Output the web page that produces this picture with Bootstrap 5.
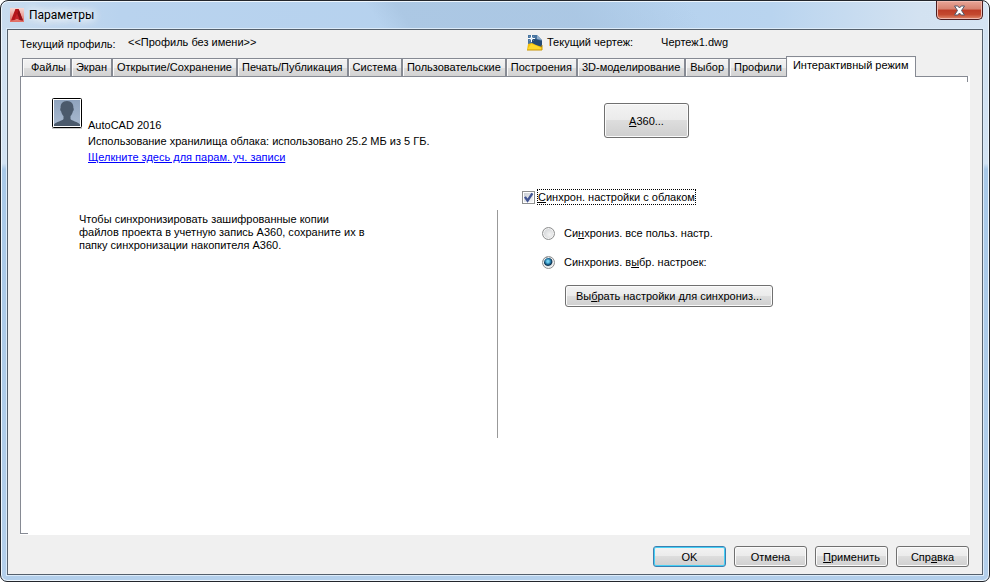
<!DOCTYPE html>
<html lang="ru">
<head>
<meta charset="utf-8">
<meta name="viewport" content="width=device-width, initial-scale=1">
<title>Параметры</title>
<link rel="stylesheet" href="https://cdn.jsdelivr.net/npm/bootstrap@5.3.0/dist/css/bootstrap.min.css">
<style>
body { font: 11px/16px "Liberation Sans", Arial, sans-serif; color: #000; background: #fff; }
.win { min-height: 100vh; padding: 0 6px 6px; border: 1px solid #23262c; border-radius: 8px 8px 7px 7px;
  box-shadow: inset 0 0 0 1px #eef6fd;
  background:
    linear-gradient(55deg, transparent 0 38%, #a3bfdb88 41% 58%, transparent 70%) 0 0 / 100% 29px no-repeat,
    linear-gradient(90deg, #c9dcef 0, #b9d3ee 12%, #b4d1ee 60%, #b9d4ef 78%, #d3e2f1 93%, #d5e4f3 100%) 0 0 / 100% 29px no-repeat,
    linear-gradient(180deg, #d0e0f0, #d3e3f3 28%, #a9c9e8 29%, #b3cfeb); }
.titlebar { height: 28px; padding-left: 3px; }
.titlebar h1 { font: 12px/16px Roboto, "Open Sans", sans-serif; padding: 6px 0 0 5px; text-shadow: 0 0 8px #fff, 0 0 10px #fff, 0 0 12px #fff; }
.titlebar > svg { margin-top: 7px; }
.closer { width: 47px; height: 19px; border: 1px solid #4a1d20; border-top: 0; border-radius: 0 0 5px 5px;
  box-shadow: inset 0 0 0 1px #f0b9ae; background: linear-gradient(#e8a698 0, #d6826f 45%, #bd3c26 50%, #c4492f 75%, #e08a6c 100%); }
.client { border: 1px solid #55606c; background: #f0f0f0; box-shadow: 0 0 0 1px #dcebf9; padding: 0 12px 7px; }
.info { height: 26px; padding-top: 4px; }
.profile-label { padding-top: 2px; width: 108px; }
.drawing { width: 443px; }
.tabs { padding-left: 2px; }
.tab-btn { height: 18px; padding: 0 4px; border: 1px solid #868a93; border-bottom: 0; white-space: nowrap; line-height: 17px; font-size: 11px;
  background: linear-gradient(#f3f3f3, #ececec 50%, #dedede 51%, #d2d2d2); box-shadow: inset 1px 1px #fafafa; }
.tab-btn:first-child { padding-left: 8px; }
.tab-btn:nth-last-child(2) { border-right: 0; }
.tab-btn.active { height: 21px; padding: 0 6px 3px; margin-bottom: -1px; background: #fff; position: relative; }
.panel { background:
    linear-gradient(#868a93, #868a93) 0 0 / calc(100% - 2px) 1px no-repeat,
    linear-gradient(#868a93, #868a93) calc(100% - 2px) 0 / 1px 6px no-repeat,
    linear-gradient(#868a93, #868a93) 0 0 / 1px calc(100% - 1px) no-repeat,
    linear-gradient(#868a93, #868a93) 0 calc(100% - 1px) / 8px 1px no-repeat, #fff; }
.account { width: 50%; padding: 22px 0 0 32px; }
.account-text { padding: 19px 0 0 6px; }
.account a { color: #00f; }
.note { margin: 48px 0 0 27px; line-height: 13px; }
.divider { width: 1px; height: 228px; margin: 134px 0 96px 2px; background: #999; }
.sync { padding: 27px 0 0 24px; }
.w7 { color: #000; border: 1px solid #707070; border-radius: 3px; box-shadow: inset 0 0 0 1px #fbfbfb; padding: 0; font-size: 11px; line-height: 16px; white-space: nowrap;
  background: linear-gradient(#f3f3f3, #ebebeb 49%, #dddddd 50%, #cfcfcf); }
.w7:hover { color: #000; border-color: #3c7fb1; }
.w7-big { width: 85px; height: 35px; margin-left: 82px; }
.w7-wide { width: 208px; height: 22px; margin: 15px 0 0 43px; }
.w7-foot { width: 73px; height: 21px; }
.w7-default, .w7-default:hover { border-color: #3c7fb1; box-shadow: inset 0 0 0 1px #46d0f5; }
.cloud-row { margin-top: 52px; }
.focus-text { outline: 1px dotted #000; line-height: 14px; }
.tick { appearance: none; width: 13px; height: 13px; margin: 0 3px 0 0; border: 1px solid #8e8f8f;
  background: linear-gradient(135deg, #cbcfd5, #f6f6f6) content-box; padding: 1px; }
.tick:checked { background: url("data:image/svg+xml,%3Csvg xmlns='http://www.w3.org/2000/svg' viewBox='0 0 11 11'%3E%3Cpath d='M2.5 5L4.7 8.2 8.8 2' fill='none' stroke='%23415494' stroke-width='2'/%3E%3C/svg%3E") border-box, linear-gradient(135deg, #cbcfd5, #f6f6f6) content-box; }
.dot { appearance: none; width: 13px; height: 13px; margin: 0 9px 0 0; border: 1px solid #8e8f8f; border-radius: 50%;
  background: radial-gradient(circle at 60% 60%, #f4f4f4 0, #d6d8da 65%); box-shadow: inset 0 0 0 1px #f4f4f4; }
.dot:checked { background: radial-gradient(circle at 45% 40%, #6fd0f2 0 1px, #1a6a98 3px, #0d2f4b 4px, #dfe3e6 5px); }
.options { margin: 21px 0 0 20px; gap: 13px; }
.footer { padding-top: 11px; padding-right: 1px; }
</style>
</head>
<body>
<main class="win d-flex flex-column">
  <header class="titlebar d-flex align-items-start">
    <svg width="14" height="14" viewBox="0 0 14 14" class="flex-shrink-0" aria-hidden="true">
      <defs><linearGradient id="lg" x1="0" y1="0" x2="0" y2="1"><stop offset="0" stop-color="#f6d9d5"/><stop offset="1" stop-color="#df6b62"/></linearGradient></defs>
      <path fill="url(#lg)" d="M0 0h14v14H0z"/>
      <path fill="#b5151b" d="M5.400 1h3.200L13 12.500 9.600 12 7 10.500 4.400 12 1 12.500z"/>
      <path fill="#8d0f15" d="M8.600 1L13 12.500 9.600 12 7.500 6z"/>
      <path fill="#c4222a" d="M7 5.500l2.500 6L7 10.500l-2.500 1z"/>
    </svg>
    <h1 class="mb-0 me-auto">Параметры</h1>
    <button type="button" class="closer p-0 d-flex align-items-center justify-content-center" aria-label="Закрыть">
      <svg width="13" height="11" viewBox="0 0 13 11"><path d="M1.500 1h3.300l1.700 2 1.700-2h3.300L8.500 5.500l3 4.500H8.200L6.500 8l-1.700 2H1.500l3-4.500z" fill="#fff" stroke="#555969"/></svg>
    </button>
  </header>

  <section class="client flex-grow-1 d-flex flex-column">
    <div class="info d-flex">
      <span class="profile-label">Текущий профиль:</span>
      <span class="flex-grow-1">&lt;&lt;Профиль без имени&gt;&gt;</span>
      <div class="drawing d-flex">
        <svg width="16" height="17" viewBox="0 0 16 17" class="me-1 flex-shrink-0" aria-hidden="true">
          <path d="M1 1h9l5 5v10H1z" fill="#4874a0"/><path d="M5 4l10 3v6H5z" fill="#254b74"/><path d="M10 1v4l5 1z" fill="#8faccb"/>
          <path d="M4.500 1v7M1 4.500h7" stroke="#fff"/><path d="M2.500 2.500l4 4M6.500 2.500l-4 4" stroke="#c5d9ea" stroke-width=".6"/>
          <path d="M0 16l1-6 4-1 4 2 6 2v3z" fill="#f3bf0c"/><path d="M0 16l4-6 5 1.500 6 3V16z" fill="#ffd92b"/><path d="M0 16h15v-5" fill="none" stroke="#c79405"/>
        </svg>
        <span class="pe-4 me-1 flex-shrink-0">Текущий чертеж:</span>
        <span>Чертеж1.dwg</span>
      </div>
    </div>

    <nav class="tabs d-flex align-items-end" role="tablist">
      <button type="button" role="tab" class="tab-btn">Файлы</button>
      <button type="button" role="tab" class="tab-btn">Экран</button>
      <button type="button" role="tab" class="tab-btn">Открытие/Сохранение</button>
      <button type="button" role="tab" class="tab-btn">Печать/Публикация</button>
      <button type="button" role="tab" class="tab-btn">Система</button>
      <button type="button" role="tab" class="tab-btn">Пользовательские</button>
      <button type="button" role="tab" class="tab-btn">Построения</button>
      <button type="button" role="tab" class="tab-btn">3D-моделирование</button>
      <button type="button" role="tab" class="tab-btn">Выбор</button>
      <button type="button" role="tab" class="tab-btn">Профили</button>
      <button type="button" role="tab" class="tab-btn active" aria-selected="true">Интерактивный режим</button>
    </nav>

    <div class="panel flex-grow-1 d-flex align-items-start" role="tabpanel">
      <div class="account">
        <div class="d-flex align-items-start">
          <svg width="30" height="31" viewBox="0 0 30 31" class="flex-shrink-0" aria-hidden="true">
            <defs><linearGradient id="av" x1="0" y1="0" x2="0" y2="1"><stop offset="0" stop-color="#8fa3bd"/><stop offset="1" stop-color="#a9bad0"/></linearGradient></defs>
            <path d="M0 30.500h30" stroke="#ccc"/>
            <rect x=".5" y=".5" width="29" height="29" rx="1" fill="#fff" stroke="#000"/>
            <path fill="url(#av)" d="M2 2h26v26H2z"/>
            <path fill="#4b5a6c" d="M15 3c4.500 0 6.600 3 6.400 7 .8.500.4 3-.6 3.400-.4 2-1.200 3.400-2.300 4.600v3c1 2 7.500 2.500 9.500 5.500V28H2v-1.500c2-3 8.500-3.500 9.500-5.500v-3c-1.100-1.200-1.900-2.600-2.300-4.600-1-.4-1.400-2.900-.6-3.400C8.400 6 10.500 3 15 3z"/>
          </svg>
          <div class="account-text">
            <div>AutoCAD 2016</div>
            <div>Использование хранилища облака: использовано 25.2 МБ из 5 ГБ.</div>
            <a href="#">Щелкните здесь для парам. уч. записи</a>
          </div>
        </div>
        <p class="note">Чтобы синхронизировать зашифрованные копии<br>файлов проекта в учетную запись A360, сохраните их в<br>папку синхронизации накопителя A360.</p>
      </div>
      <div class="divider"></div>
      <div class="sync">
        <button type="button" class="btn w7 w7-big"><u>A</u>360...</button>
        <div class="cloud-row d-flex align-items-center">
          <input class="tick" type="checkbox" id="cloud" checked>
          <label class="focus-text" for="cloud"><u>С</u>инхрон. настройки с облаком</label>
        </div>
        <div class="options d-flex flex-column">
          <div class="d-flex align-items-center">
            <input class="dot" type="radio" name="mode" id="all">
            <label for="all">Си<u>н</u>хрониз. все польз. настр.</label>
          </div>
          <div class="d-flex align-items-center">
            <input class="dot" type="radio" name="mode" id="some" checked>
            <label for="some">Синхрониз. в<u>ы</u>бр. настроек:</label>
          </div>
        </div>
        <button type="button" class="btn w7 w7-wide">Вы<u>б</u>рать настройки для синхрониз...</button>
      </div>
    </div>

    <footer class="footer d-flex justify-content-end gap-2">
      <button type="button" class="btn w7 w7-foot w7-default">OK</button>
      <button type="button" class="btn w7 w7-foot">Отмена</button>
      <button type="button" class="btn w7 w7-foot"><u>П</u>рименить</button>
      <button type="button" class="btn w7 w7-foot">Спр<u>а</u>вка</button>
    </footer>
  </section>
</main>
<script src="https://cdn.jsdelivr.net/npm/bootstrap@5.3.0/dist/js/bootstrap.bundle.min.js"></script>
</body>
</html>
